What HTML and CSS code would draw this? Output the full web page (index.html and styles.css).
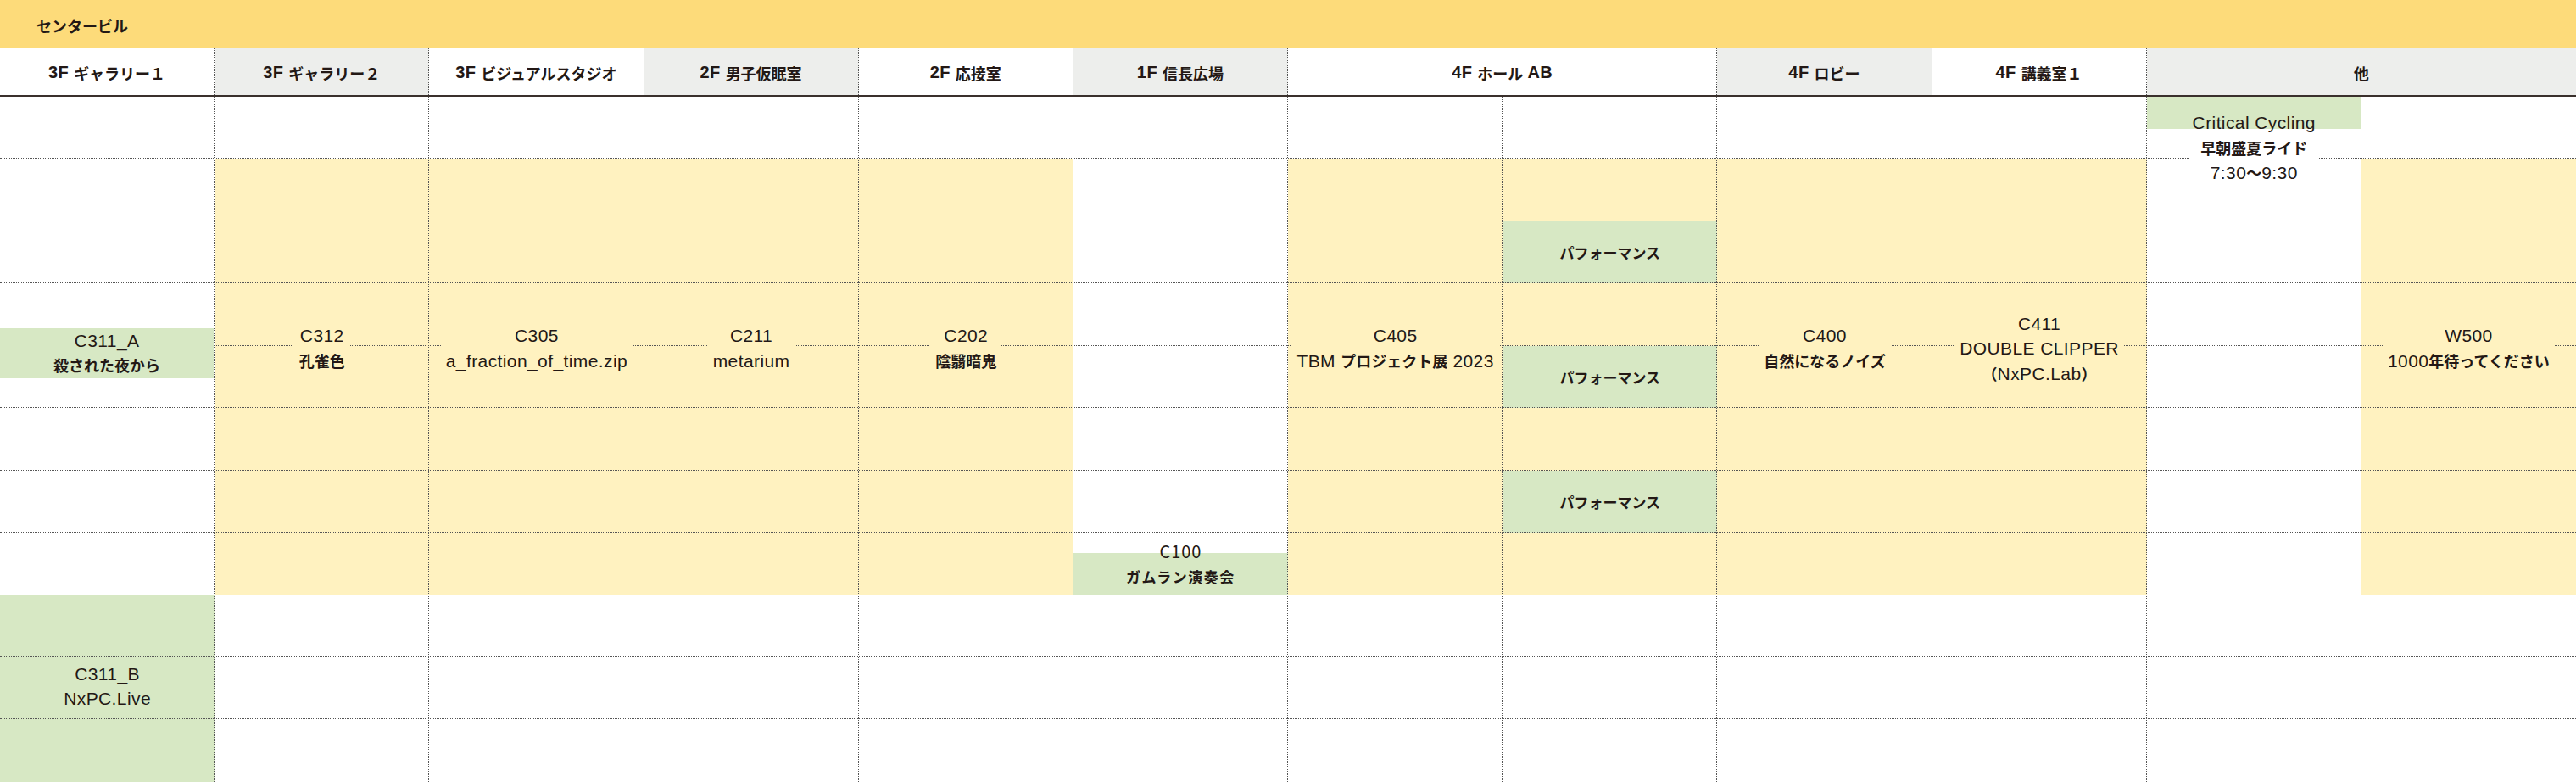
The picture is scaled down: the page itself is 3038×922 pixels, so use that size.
FILE: index.html
```html
<!DOCTYPE html>
<html lang="ja">
<head>
<meta charset="utf-8">
<title>センタービル</title>
<link rel="stylesheet" href="styles.css">
</head>
<body>
<div class="title"><span class="ja">センタービル</span></div>

<div class="heads">
  <div class="head">3F <span class="ja">ギャラリー１</span></div>
  <div class="head gray">3F <span class="ja">ギャラリー２</span></div>
  <div class="head">3F <span class="ja">ビジュアルスタジオ</span></div>
  <div class="head gray">2F <span class="ja">男子仮眠室</span></div>
  <div class="head">2F <span class="ja">応接室</span></div>
  <div class="head gray">1F <span class="ja">信長広場</span></div>
  <div class="head wide">4F <span class="ja">ホール</span> AB</div>
  <div class="head gray">4F <span class="ja">ロビー</span></div>
  <div class="head">4F <span class="ja">講義室１</span></div>
  <div class="head gray wide"><span class="ja">他</span></div>
</div>

<div class="board">
  <!-- fills -->
  <div class="fill y c2 w4 r2 h7"></div>
  <div class="fill y c7 w4 r2 h7"></div>
  <div class="fill y c12 r2 h7"></div>
  <div class="fill g c11 r1 top"></div>
  <div class="fill g c6 r8 bottom"></div>
  <div class="fill g perf c8 r3"><span class="ja">パフォーマンス</span></div>
  <div class="fill g perf c8 r5"><span class="ja">パフォーマンス</span></div>
  <div class="fill g perf c8 r7"><span class="ja">パフォーマンス</span></div>
  <div class="fill g late c1 r9 h3"><div>C311_B</div><div>NxPC.Live</div></div>

  <!-- grid lines -->
  <div class="vline c1"></div>
  <div class="vline c2"></div>
  <div class="vline c3"></div>
  <div class="vline c4"></div>
  <div class="vline c5"></div>
  <div class="vline c6"></div>
  <div class="vline c7"></div>
  <div class="vline c8"></div>
  <div class="vline c9"></div>
  <div class="vline c10"></div>
  <div class="vline c11"></div>
  <div class="hline r1"></div>
  <div class="hline r2"></div>
  <div class="hline r3"></div>
  <div class="hline r4"></div>
  <div class="hline r5"></div>
  <div class="hline r6"></div>
  <div class="hline r7"></div>
  <div class="hline r8"></div>
  <div class="hline r9"></div>
  <div class="hline r10"></div>

  <!-- labels -->
  <div class="label band c1 r1 h8"><div class="txt"><div>C311_A</div><div class="ja">殺された夜から</div></div></div>
  <div class="label c2 r1 h8"><div class="txt"><div>C312</div><div class="ja">孔雀色</div></div></div>
  <div class="label c3 r1 h8"><div class="txt"><div>C305</div><div>a_fraction_of_time.zip</div></div></div>
  <div class="label c4 r1 h8"><div class="txt"><div>C211</div><div>metarium</div></div></div>
  <div class="label c5 r1 h8"><div class="txt"><div>C202</div><div class="ja">陰翳暗鬼</div></div></div>
  <div class="label c7 r1 h8"><div class="txt"><div>C405</div><div>TBM <span class="ja">プロジェクト展</span> 2023</div></div></div>
  <div class="label c9 r1 h8"><div class="txt"><div>C400</div><div class="ja">自然になるノイズ</div></div></div>
  <div class="label c10 r1 h8"><div class="txt"><div>C411</div><div>DOUBLE CLIPPER</div><div><span class="ja">（</span>NxPC.Lab<span class="ja">）</span></div></div></div>
  <div class="label c12 r1 h8"><div class="txt"><div>W500</div><div>1000<span class="ja">年待ってください</span></div></div></div>
  <div class="label early c11 r1 h2"><div class="txt"><div>Critical Cycling</div><div class="ja">早朝盛夏ライド</div><div>7:30<span class="ja">〜</span>9:30</div></div></div>
  <div class="label gamelan c6 r8"><div class="txt"><div>C100</div><div class="ja">ガムラン演奏会</div></div></div>
</div>
</body>
</html>
```

FILE: styles.css
```css
* { box-sizing: border-box; }
html, body { margin: 0; padding: 0; }
body {
  width: 3038px;
  height: 922px;
  overflow: hidden;
  background: #ffffff;
  color: #231815;
  font-family: "Liberation Sans", "Noto Sans CJK JP", sans-serif;
  font-size: 21px;
  letter-spacing: 0.4px;
}
.ja {
  font-family: "Noto Sans CJK JP", sans-serif;
  font-size: 18px;
  font-weight: 700;
  letter-spacing: 0;
}

.title {
  height: 57px;
  background: #fddb7a;
  display: flex;
  align-items: center;
  padding: 3px 0 0 43px;
}

.heads {
  display: grid;
  grid-template-columns: repeat(12, 1fr);
  height: 57px;
  border-bottom: 2px solid #3a302c;
}
.head {
  display: flex;
  align-items: center;
  justify-content: center;
  padding-top: 2px;
  font-size: 20px;
  font-weight: 700;
  background: #ffffff;
  border-right: 1px dotted #555555;
  white-space: pre;
}
.head.gray { background: #edeeec; }
.head.wide { grid-column-end: span 2; }
.head:last-child { border-right: 0; }

.board {
  display: grid;
  grid-template-columns: repeat(12, 1fr);
  grid-template-rows: repeat(11, 73.45px);
}

/* placement */
.c1 { grid-column-start: 1; }
.c2 { grid-column-start: 2; }
.c3 { grid-column-start: 3; }
.c4 { grid-column-start: 4; }
.c5 { grid-column-start: 5; }
.c6 { grid-column-start: 6; }
.c7 { grid-column-start: 7; }
.c8 { grid-column-start: 8; }
.c9 { grid-column-start: 9; }
.c10 { grid-column-start: 10; }
.c11 { grid-column-start: 11; }
.c12 { grid-column-start: 12; }
.r1 { grid-row-start: 1; }
.r2 { grid-row-start: 2; }
.r3 { grid-row-start: 3; }
.r4 { grid-row-start: 4; }
.r5 { grid-row-start: 5; }
.r6 { grid-row-start: 6; }
.r7 { grid-row-start: 7; }
.r8 { grid-row-start: 8; }
.r9 { grid-row-start: 9; }
.r10 { grid-row-start: 10; }
.w4 { grid-column-end: span 4; }
.h2 { grid-row-end: span 2; }
.h3 { grid-row-end: span 3; }
.h7 { grid-row-end: span 7; }
.h8 { grid-row-end: span 8; }

/* fills */
.fill.y { background: #fff2c0; }
.fill.g { background: #d7e8c4; }
.fill.top { align-self: start; height: 38px; }
.fill.bottom { align-self: end; height: 50px; }
.perf {
  display: flex;
  align-items: center;
  justify-content: center;
}
.perf .ja { font-size: 17px; }
.late {
  display: flex;
  flex-direction: column;
  align-items: center;
  justify-content: center;
  line-height: 29.5px;
  padding-bottom: 5px;
}

/* grid lines */
.vline { grid-row: 1 / -1; border-right: 1px dotted #555555; }
.hline { grid-column: 1 / -1; border-bottom: 1px dotted #555555; }

/* labels */
.label {
  display: flex;
  align-items: center;
  justify-content: center;
  text-align: center;
  line-height: 29.5px;
  padding-top: 6px;
  white-space: nowrap;
}
.label .txt {
  background: #fff2c0;
  padding: 0 6px;
}
.label.band { justify-content: flex-start; padding-top: 17px; }
.label.band .txt {
  width: calc(100% - 1px);
  background: #d7e8c4;
  padding: 0;
}
.label.early { align-items: flex-start; padding-top: 16px; }
.label.early .txt {
  background: linear-gradient(to bottom, transparent 29.5px, #ffffff 29.5px);
  padding: 0 3px;
}
.label.gamelan {
  padding-top: 0;
  font-family: "Noto Sans CJK JP", sans-serif;
  font-size: 20px;
  letter-spacing: 1px;
}
.label.gamelan .txt { background: transparent; }
.label.gamelan .ja { font-size: 17px; letter-spacing: 1.5px; }
```
